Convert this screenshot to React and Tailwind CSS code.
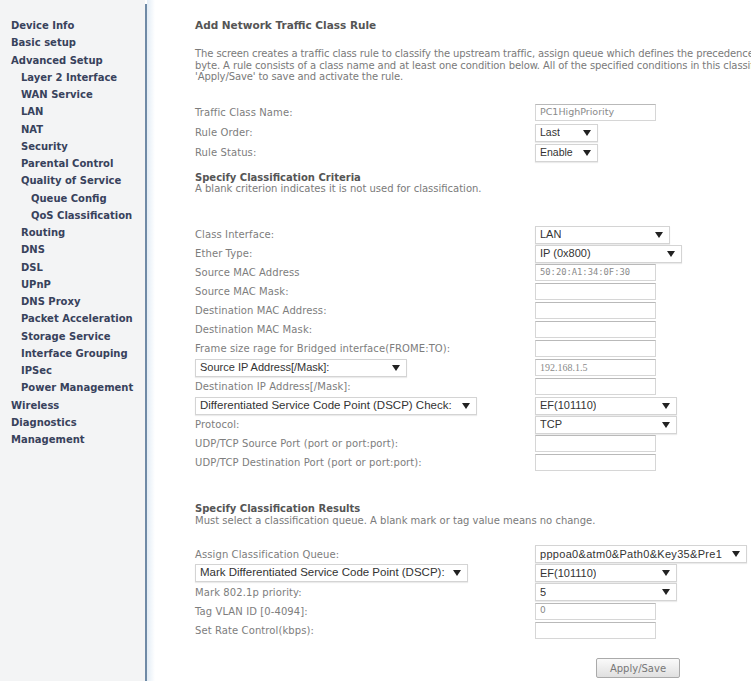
import React from 'react';

const menu = [
  ['Device Info', 0],
  ['Basic setup', 0],
  ['Advanced Setup', 0],
  ['Layer 2 Interface', 1],
  ['WAN Service', 1],
  ['LAN', 1],
  ['NAT', 1],
  ['Security', 1],
  ['Parental Control', 1],
  ['Quality of Service', 1],
  ['Queue Config', 2],
  ['QoS Classification', 2],
  ['Routing', 1],
  ['DNS', 1],
  ['DSL', 1],
  ['UPnP', 1],
  ['DNS Proxy', 1],
  ['Packet Acceleration', 1],
  ['Storage Service', 1],
  ['Interface Grouping', 1],
  ['IPSec', 1],
  ['Power Management', 1],
  ['Wireless', 0],
  ['Diagnostics', 0],
  ['Management', 0],
];

const indent = ['pl-[11px]', 'pl-[21px]', 'pl-[31px]'];

const Arrow = () => (
  <svg width="8" height="6" viewBox="0 0 8 6" className="shrink-0">
    <path d="M0 0 L8 0 L4 6 Z" fill="#222" />
  </svg>
);

const Select = ({ value, w, text = 'text-[11px]' }) => (
  <div className={`${w} h-[18px] flex items-center justify-between pl-[4px] pr-[6px] bg-white border border-[#d4d4d4] shadow-[0_1px_1px_rgba(0,0,0,0.08)] font-['Liberation_Sans',Arial,sans-serif]`}>
    <span className={`${text} text-[#333] whitespace-nowrap overflow-hidden`}>{value}</span>
    <Arrow />
  </div>
);

const Input = ({ value, font = "font-['DejaVu_Sans',sans-serif] text-[9px]" }) => (
  <div className={`w-[121px] h-[17px] flex items-center pl-[4px] bg-white border border-[#d6d6d6] border-t-[#b9b9b9] text-[#8a8a8a] ${font}`}>
    {value}
  </div>
);

const Row = ({ label, children, h = 'h-[19px]' }) => (
  <div className={`${h} flex items-center`}>
    <div className="w-[340px] shrink-0 text-[10px] tracking-[0.1px] text-[#7d7d7d] whitespace-nowrap">{label}</div>
    {children}
  </div>
);

const LeftRow = ({ children, right }) => (
  <div className="h-[19px] flex items-center">
    <div className="w-[340px] shrink-0">{children}</div>
    {right}
  </div>
);

export default function App() {
  return (
    <div className="w-[751px] h-[681px] overflow-hidden bg-white flex font-['DejaVu_Sans',Verdana,sans-serif]">
      <div className="w-[145px] shrink-0 bg-[#f3f4f5] pt-[17px]">
        {menu.map(([name, lvl]) => (
          <div key={name} className={`${indent[lvl]} text-[10px] font-bold leading-[17.25px] text-[#38425c] whitespace-nowrap`}>
            {name}
          </div>
        ))}
      </div>
      <div className="w-[2px] shrink-0 mt-[4px] bg-[#6f8aa6]" />
      <div className="w-[8px] shrink-0 bg-gradient-to-r from-[#e3edf6] to-white" />
      <div className="flex-1 pl-[40px] pt-[18px] overflow-hidden">
        <div className="text-[10.5px] font-bold text-[#555] leading-[14px]">Add Network Traffic Class Rule</div>
        <div className="mt-[16px] text-[10px] tracking-[-0.1px] text-[#7a7a7a] leading-[11.5px] whitespace-nowrap">
          <div>The screen creates a traffic class rule to classify the upstream traffic, assign queue which defines the precedence and the interface and optionally overwrite the IP header DSCP</div>
          <div>byte. A rule consists of a class name and at least one condition below. All of the specified conditions in this classification rule must be satisfied for the rule to take effect. Click</div>
          <div>'Apply/Save' to save and activate the rule.</div>
        </div>

        <div className="mt-[20px]">
          <Row label="Traffic Class Name:" h="h-[20px]">
            <Input value="PC1HighPriority" font="font-['DejaVu_Sans',sans-serif] text-[9.5px]" />
          </Row>
          <Row label="Rule Order:" h="h-[20px]">
            <Select value="Last" w="w-[63px]" text="text-[10.5px]" />
          </Row>
          <Row label="Rule Status:" h="h-[20px]">
            <Select value="Enable" w="w-[63px]" text="text-[10.5px]" />
          </Row>
        </div>

        <div className="mt-[9px] leading-[11.5px] whitespace-nowrap">
          <div className="text-[10px] font-bold text-[#555]">Specify Classification Criteria</div>
          <div className="text-[10px] text-[#7a7a7a]">A blank criterion indicates it is not used for classification.</div>
        </div>

        <div className="mt-[30.5px]">
          <Row label="Class Interface:">
            <Select value="LAN" w="w-[135px]" />
          </Row>
          <Row label="Ether Type:">
            <Select value="IP (0x800)" w="w-[147px]" />
          </Row>
          <Row label="Source MAC Address">
            <Input value="50:20:A1:34:0F:30" font="font-['DejaVu_Sans_Mono',monospace] text-[8.8px]" />
          </Row>
          <Row label="Source MAC Mask:">
            <Input value="" />
          </Row>
          <Row label="Destination MAC Address:">
            <Input value="" />
          </Row>
          <Row label="Destination MAC Mask:">
            <Input value="" />
          </Row>
          <Row label="Frame size rage for Bridged interface(FROME:TO):">
            <Input value="" />
          </Row>
          <LeftRow right={<Input value="192.168.1.5" font="font-['Liberation_Serif',serif] text-[10px]" />}>
            <Select value="Source IP Address[/Mask]:" w="w-[212px]" />
          </LeftRow>
          <Row label="Destination IP Address[/Mask]:">
            <Input value="" />
          </Row>
          <LeftRow right={<Select value="EF(101110)" w="w-[142px]" />}>
            <Select value="Differentiated Service Code Point (DSCP) Check:" w="w-[282px]" text="text-[11.5px]" />
          </LeftRow>
          <Row label="Protocol:">
            <Select value="TCP" w="w-[142px]" />
          </Row>
          <Row label="UDP/TCP Source Port (port or port:port):">
            <Input value="" />
          </Row>
          <Row label="UDP/TCP Destination Port (port or port:port):">
            <Input value="" />
          </Row>
        </div>

        <div className="mt-[31px] leading-[11.5px] whitespace-nowrap">
          <div className="text-[10px] font-bold text-[#555]">Specify Classification Results</div>
          <div className="text-[10px] text-[#7a7a7a]">Must select a classification queue. A blank mark or tag value means no change.</div>
        </div>

        <div className="mt-[18.5px]">
          <Row label="Assign Classification Queue:">
            <Select value="pppoa0&atm0&Path0&Key35&Pre1" w="w-[212px]" text="text-[11px] tracking-[0.3px]" />
          </Row>
          <LeftRow right={<Select value="EF(101110)" w="w-[142px]" />}>
            <Select value="Mark Differentiated Service Code Point (DSCP):" w="w-[273px]" text="text-[11.5px]" />
          </LeftRow>
          <Row label="Mark 802.1p priority:">
            <Select value="5" w="w-[142px]" />
          </Row>
          <Row label="Tag VLAN ID [0-4094]:">
            <Input value="0" />
          </Row>
          <Row label="Set Rate Control(kbps):">
            <Input value="" />
          </Row>
        </div>

        <div className="mt-[15px] pl-[401px]">
          <button className="w-[84px] h-[20px] text-[10px] text-[#777] bg-gradient-to-b from-[#fafafa] to-[#e0e0e0] border border-[#aaa] rounded-[2px]">
            Apply/Save
          </button>
        </div>
      </div>
    </div>
  );
}
